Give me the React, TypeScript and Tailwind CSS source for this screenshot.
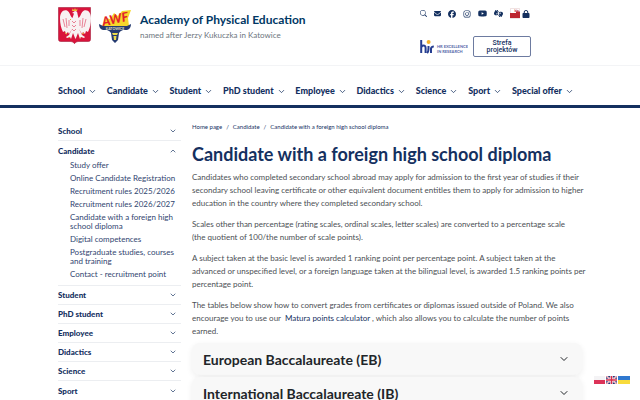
import React from "react";
import { ChevronDown, ChevronUp } from "lucide-react";
import { FaEnvelope, FaFacebook, FaInstagram, FaYoutube, FaLock, FaHandsAslInterpreting } from "react-icons/fa6";
import { BsSearch } from "react-icons/bs";

const navItems = [
  "School",
  "Candidate",
  "Student",
  "PhD student",
  "Employee",
  "Didactics",
  "Science",
  "Sport",
  "Special offer",
];

const candidateLinks = [
  "Study offer",
  "Online Candidate Registration",
  "Recruitment rules 2025/2026",
  "Recruitment rules 2026/2027",
  "Candidate with a foreign high school diploma",
  "Digital competences",
  "Postgraduate studies, courses and training",
  "Contact - recruitment point",
];

const laterSections = ["Student", "PhD student", "Employee", "Didactics", "Science", "Sport"];

function Emblem() {
  return (
    <svg viewBox="0 0 33 37" className="h-[37px] w-[33px]" role="img" aria-label="Polish coat of arms">
      <path d="M.5.5h32v32q0 2-2 2H20q-2 0-3.500 2.200Q15 34.500 13 34.500H2.500q-2 0-2-2z" fill="#d9133b" stroke="#a51d3b" strokeWidth=".6" />
      <g fill="#f8f1f2">
        <path d="M14.500 11C12 9 12 5 9 3.500 5 2 2 6 2 11q0 8 3 14l2-1 1 3 2-2 1 2 3-5-3 6-3 2 1 1 3-1 1 2 1-3 1-3 2 5 .5 1 .5-1 2-5 1 3 1 3 1-2 3 1 1-1-3-2-3-6 3 5 1-2 2 2 1-3 2 1q3-6 3-14c0-5-3-9-7-7.500-3 1.500-3 5.500-5.500 7.500l-1-4q0-3-2.500-3l-3 2 2 .5z" />
      </g>
      <g stroke="#d9133b" strokeWidth=".5" fill="none">
        <path d="M5 12l2 8M8 11l1 10M11 13v6M28 12l-2 8M25 11l-1 10M22 13v6M14 14l2 2 2-2M14 18l2 2 2-2M14 22l2 2 2-2" />
      </g>
      <path d="M14 4l.5-2.500L16 3l1-2 1 2 1.500-1.500L19 4z" fill="#f2bd39" />
      <path d="M7 26l2 1M26 26l-2 1M13 12l-1 1M11.500 30l-1 1M21.500 30l1 1" stroke="#e8b33c" strokeWidth="1" />
    </svg>
  );
}

function AwfLogo() {
  return (
    <svg viewBox="0 0 33 34" className="h-[34px] w-[33px]" role="img" aria-label="AWF Katowice">
      <path d="M3 18L7 9l4 1 4-6 4 3 4-5 9-1-3 8 1 8z" fill="#f6d72b" />
      <text x="4" y="17" fontFamily="Lato, sans-serif" fontWeight="900" fontStyle="italic" fontSize="12.500" fill="#e21f2b" transform="rotate(-12 5 17)">AWF</text>
      <path d="M0 15l4 2h24l4-2q0 5-4 6H24q-3 1-4 3l-1 7-3 3-3-3-1-7q-1-2-4-3H4q-4-1-4-6z" fill="#253b70" />
      <path d="M13 24h6l-1 2h-4zM14.500 27h3l-.5 4h-2z" fill="#eada4b" />
      <text x="16" y="20.500" textAnchor="middle" fontFamily="Lato, sans-serif" fontWeight="700" fontSize="3.500" fill="#e4e3c0">KATOWICE</text>
    </svg>
  );
}

function HrLogo() {
  return (
    <svg viewBox="0 0 48 15" className="h-[15px] w-12" role="img" aria-label="HR Excellence in Research">
      <path d="M1.200 1v13M1.200 9q0-2.500 2.200-2.500T5.600 9v5M8.500 7v2q0 4.200-1.400 5" fill="none" stroke="#263e91" strokeWidth="2" />
      <path d="M11 14V9.500q.5-2 2.800-2" fill="none" stroke="#263e91" strokeWidth="2" />
      <circle cx="8.600" cy="3" r="2" fill="#f4b229" />
      <text x="17" y="9" fontFamily="Lato, sans-serif" fontWeight="700" fontSize="4" fill="#5264a8">HR EXCELLENCE</text>
      <text x="17" y="14" fontFamily="Lato, sans-serif" fontWeight="700" fontSize="4" fill="#5264a8">IN RESEARCH</text>
    </svg>
  );
}

function BipLogo() {
  return (
    <svg viewBox="0 0 10 11" className="h-[11px] w-[10px]" aria-hidden="true">
      <path d="M.5.5h9v10h-9z" fill="#fff" stroke="#d9b5b5" strokeWidth=".4" />
      <path d="M0 5h6V3.500h4V10H0z" fill="#bd2530" />
      <text x="4.500" y="3.600" fontFamily="Lato, sans-serif" fontWeight="700" fontSize="3" fill="#bd2530">bip</text>
    </svg>
  );
}

function Flags() {
  return (
    <div className="fixed right-[10px] top-[376px] flex">
      <a href="#pl" aria-label="Polski">
        <svg viewBox="0 0 12 8" className="h-2 w-3">
          <path d="M0 0h11v4H0z" fill="#f4f3f5" />
          <path d="M0 4h11v4H0z" fill="#dc3358" />
        </svg>
      </a>
      <a href="#en" aria-label="English">
        <svg viewBox="0 0 12 8" className="h-2 w-3">
          <path d="M0 0h11v8H0z" fill="#283777" />
          <path d="M0 0l11 8M11 0L0 8" stroke="#fff" strokeWidth="1.600" />
          <path d="M0 0l11 8M11 0L0 8" stroke="#d62b49" strokeWidth=".6" />
          <path d="M5.500 0v8M0 4h11" stroke="#fff" strokeWidth="2.600" />
          <path d="M5.500 0v8M0 4h11" stroke="#d62b49" strokeWidth="1.500" />
        </svg>
      </a>
      <a href="#uk" aria-label="Українська">
        <svg viewBox="0 0 12 8" className="h-2 w-3">
          <path d="M0 0h12v4H0z" fill="#2f78cf" />
          <path d="M0 4h12v4H0z" fill="#f8db3c" />
        </svg>
      </a>
    </div>
  );
}

function SectionRow({ label, open = false }: { label: string; open?: boolean }) {
  return (
    <button type="button" aria-expanded={open} className="flex h-[19px] w-full items-center justify-between text-left text-[8px] font-black text-[#14305f]">
      {label}
      {open ? <ChevronUp className="mr-1 size-2" /> : <ChevronDown className="mr-1 size-2" />}
    </button>
  );
}

function Accordion({ title }: { title: string }) {
  return (
    <button
      type="button"
      aria-expanded={false}
      className="flex h-8 w-full items-center justify-between rounded-lg bg-[#f8f8f8] pl-[11px] pr-3 text-left text-[14px] font-bold text-[#212529] shadow-[0_2px_6px_rgba(0,0,0,0.07)]"
    >
      {title}
      <ChevronDown className="size-3" strokeWidth={2} />
    </button>
  );
}

export default function App() {
  return (
    <div className="h-screen overflow-hidden bg-white font-['Lato',sans-serif] text-[#14305f]">
      <header>
        <div className="mx-auto flex h-[65px] w-full max-w-[524px] items-start justify-between">
          <div className="flex gap-2 pt-[7px]">
            <Emblem />
            <div className="pt-[2px]">
              <AwfLogo />
            </div>
            <div className="pt-[5px]">
              <p className="text-[12px] font-bold leading-4 text-[#003764]">Academy of Physical Education</p>
              <p className="text-[8px] leading-[14px] text-[#6c757d]">named after Jerzy Kukuczka in Katowice</p>
            </div>
          </div>
          <div className="flex w-[162px] flex-col gap-[17px] pt-2">
            <div className="flex h-[11px] items-center gap-[7px]">
              <button type="button" aria-label="Search"><BsSearch className="size-[7px]" /></button>
              <a href="#mail" aria-label="E-mail"><FaEnvelope className="size-[7px]" /></a>
              <a href="#facebook" aria-label="Facebook"><FaFacebook className="size-2" /></a>
              <a href="#instagram" aria-label="Instagram"><FaInstagram className="size-2" /></a>
              <a href="#youtube" aria-label="YouTube"><FaYoutube className="size-[9px]" /></a>
              <a href="#sign-language" aria-label="Sign language"><FaHandsAslInterpreting className="size-[9px]" /></a>
              <div className="flex items-center gap-[2px]">
                <a href="#bip" aria-label="BIP"><BipLogo /></a>
                <a href="#login" aria-label="Log in"><FaLock className="size-2" /></a>
              </div>
            </div>
            <div className="flex items-center gap-[5px]">
              <HrLogo />
              <button type="button" className="h-[21px] w-[58px] rounded-[2px] border border-[#6d7ba0] font-['Roboto',sans-serif] text-[7px] font-medium leading-[7px]">
                Strefa<br />projektów
              </button>
            </div>
          </div>
        </div>
        <nav className="border-t border-[#f3f4f6] border-b-[3px] border-b-[#14305f]">
          <ul className="mx-auto flex h-[39px] w-full max-w-[524px] items-center justify-between pb-px pr-2 pt-3">
            {navItems.map((item) => (
              <li key={item}>
                <button type="button" className="flex items-center gap-[3px] text-[9px] font-black leading-3">
                  {item}
                  <ChevronDown className="size-[9px]" strokeWidth={2} />
                </button>
              </li>
            ))}
          </ul>
        </nav>
      </header>

      <div className="mx-auto flex w-full max-w-[524px] gap-[11px] pt-[14px]">
        <aside className="w-[123px] shrink-0 divide-y divide-[#eceef1]">
          <SectionRow label="School" />
          <div>
            <SectionRow label="Candidate" open />
            <ul className="flex flex-col gap-1 pb-[6px] pl-3 pt-px text-[8px] leading-[9px] text-[#31456f]">
              {candidateLinks.map((link) => (
                <li key={link}><a href="#candidate">{link}</a></li>
              ))}
            </ul>
          </div>
          {laterSections.map((label) => (
            <SectionRow key={label} label={label} />
          ))}
        </aside>

        <main className="min-w-0 flex-1">
          <nav aria-label="Breadcrumb" className="flex gap-1 text-[6px] leading-[10px]">
            <a href="#home">Home page</a>
            <span>/</span>
            <a href="#candidate">Candidate</a>
            <span>/</span>
            <span>Candidate with a foreign high school diploma</span>
          </nav>
          <h1 className="pb-[5px] pt-[10px] text-[18px] font-bold leading-6">Candidate with a foreign high school diploma</h1>
          <div className="flex flex-col gap-2 whitespace-nowrap text-[8px] leading-[13px] text-[#4b4f54]">
            <p>
              Candidates who completed secondary school abroad may apply for admission to the first year of studies if their<br />
              secondary school leaving certificate or other equivalent document entitles them to apply for admission to higher<br />
              education in the country where they completed secondary school.
            </p>
            <p>
              Scales other than percentage (rating scales, ordinal scales, letter scales) are converted to a percentage scale<br />
              (the quotient of 100/the number of scale points).
            </p>
            <p>
              A subject taken at the basic level is awarded 1 ranking point per percentage point. A subject taken at the<br />
              advanced or unspecified level, or a foreign language taken at the bilingual level, is awarded 1.5 ranking points per<br />
              percentage point.
            </p>
            <p>
              The tables below show how to convert grades from certificates or diplomas issued outside of Poland. We also<br />
              encourage you to use our&nbsp; <a href="#calculator" className="text-[#14305f]">Matura points calculator</a> , which also allows you to calculate the number of points<br />
              earned.
            </p>
          </div>
          <div className="flex flex-col gap-[2px] pt-[5px]">
            <Accordion title="European Baccalaureate (EB)" />
            <Accordion title="International Baccalaureate (IB)" />
          </div>
        </main>
      </div>
      <Flags />
    </div>
  );
}
